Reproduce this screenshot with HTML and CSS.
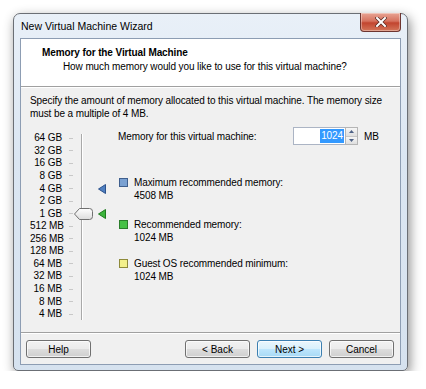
FILE: index.html
```html
<!DOCTYPE html>
<html lang="en">
<head>
  <meta charset="UTF-8" />
  <title>New Virtual Machine Wizard</title>
  <link rel="stylesheet" href="styles.css">
</head>
<body>

  <div class="window">
    <div class="titlebar">
      <span class="caption">New Virtual Machine Wizard</span>
      <button class="close" title="Close">
        <svg width="12" height="10" viewBox="0 0 12 10">
          <path d="M2 1 L10 9 M10 1 L2 9" stroke="#5a2a22" stroke-width="3.4" stroke-linecap="square"/>
          <path d="M2 1 L10 9 M10 1 L2 9" stroke="#fff" stroke-width="2" stroke-linecap="square"/>
        </svg>
      </button>
    </div>

    <div class="client">
      <div class="header">
        <h1>Memory for the Virtual Machine</h1>
        <p>How much memory would you like to use for this virtual machine?</p>
      </div>

      <div class="content">
        <p class="intro">Specify the amount of memory allocated to this virtual machine. The memory size<br>must be a multiple of 4 MB.</p>

        <div class="memory">
          <ul class="scale">
            <li><span class="lbl">64 GB</span><span class="tick"></span><span class="track"></span><span class="mark"></span></li>
            <li><span class="lbl">32 GB</span><span class="tick"></span><span class="track"></span><span class="mark"></span></li>
            <li><span class="lbl">16 GB</span><span class="tick"></span><span class="track"></span><span class="mark"></span></li>
            <li><span class="lbl">8 GB</span><span class="tick"></span><span class="track"></span><span class="mark"></span></li>
            <li><span class="lbl">4 GB</span><span class="tick"></span><span class="track"></span>
              <span class="mark"><svg width="8" height="10" viewBox="0 0 8 10"><path d="M0.5 5 L7.5 0.5 L7.5 9.5 Z" fill="#4f7fc0" stroke="#2c528c" stroke-width="1"/></svg></span></li>
            <li><span class="lbl">2 GB</span><span class="tick"></span><span class="track"></span><span class="mark"></span></li>
            <li><span class="lbl">1 GB</span><span class="tick"></span>
              <span class="track">
                <svg class="thumb" width="19" height="12" viewBox="0 0 19 12">
                  <defs>
                    <linearGradient id="thumbFill" x1="0" y1="0" x2="0" y2="1">
                      <stop offset="0" stop-color="#ffffff"/>
                      <stop offset="1" stop-color="#dcdcdc"/>
                    </linearGradient>
                  </defs>
                  <path d="M0.5 6 L5.5 0.5 L15.5 0.5 Q18.5 0.5 18.5 3.5 L18.5 8.5 Q18.5 11.5 15.5 11.5 L5.5 11.5 Z" fill="url(#thumbFill)" stroke="#707070" stroke-width="1"/>
                </svg>
              </span>
              <span class="mark"><svg width="8" height="10" viewBox="0 0 8 10"><path d="M0.5 5 L7.5 0.5 L7.5 9.5 Z" fill="#3cb43c" stroke="#1f7a1f" stroke-width="1"/></svg></span></li>
            <li><span class="lbl">512 MB</span><span class="tick"></span><span class="track"></span><span class="mark"></span></li>
            <li><span class="lbl">256 MB</span><span class="tick"></span><span class="track"></span><span class="mark"></span></li>
            <li><span class="lbl">128 MB</span><span class="tick"></span><span class="track"></span><span class="mark"></span></li>
            <li><span class="lbl">64 MB</span><span class="tick"></span><span class="track"></span><span class="mark"></span></li>
            <li><span class="lbl">32 MB</span><span class="tick"></span><span class="track"></span><span class="mark"></span></li>
            <li><span class="lbl">16 MB</span><span class="tick"></span><span class="track"></span><span class="mark"></span></li>
            <li><span class="lbl">8 MB</span><span class="tick"></span><span class="track"></span><span class="mark"></span></li>
            <li><span class="lbl">4 MB</span><span class="tick"></span><span class="track"></span><span class="mark"></span></li>
          </ul>

          <div class="settings">
            <div class="amount">
              <span class="amount-label">Memory for this virtual machine:</span>
              <div class="spinner">
                <div class="spin-input"><span class="selected">1024</span></div>
                <div class="spin-buttons">
                  <span class="spin up"><svg width="5" height="3" viewBox="0 0 5 3"><path d="M0 3 L2.5 0 L5 3 Z" fill="#4d6185"/></svg></span>
                  <span class="spin down"><svg width="5" height="3" viewBox="0 0 5 3"><path d="M0 0 L2.5 3 L5 0 Z" fill="#4d6185"/></svg></span>
                </div>
              </div>
              <span class="unit">MB</span>
            </div>

            <div class="legend legend-max">
              <span class="swatch blue"></span>
              <div>Maximum recommended memory:<br>4508 MB</div>
            </div>
            <div class="legend legend-rec">
              <span class="swatch green"></span>
              <div>Recommended memory:<br>1024 MB</div>
            </div>
            <div class="legend legend-min">
              <span class="swatch yellow"></span>
              <div>Guest OS recommended minimum:<br>1024 MB</div>
            </div>
          </div>
        </div>
      </div>

      <div class="buttons">
        <button class="btn">Help</button>
        <span class="spacer"></span>
        <button class="btn">&lt; Back</button>
        <button class="btn default">Next &gt;</button>
        <button class="btn">Cancel</button>
      </div>
    </div>
  </div>

</body>
</html>
```

FILE: styles.css
```css
body {
  margin: 0;
  padding: 13px 0 0 13px;
  background: #ffffff;
  font-family: "Liberation Sans", Arial, sans-serif;
  font-size: 10px;
  letter-spacing: -0.1px;
  color: #000;
}
.window {
  width: 395px;
  height: 358px;
  border: 1px solid #6b6f75;
  border-radius: 7px 7px 5px 5px;
  background: linear-gradient(to bottom, #e9f0f8 0%, #dbe6f2 40%, #d6e2ef 100%);
  box-shadow: 2px 4px 12px rgba(0, 0, 0, 0.45);
  display: flex;
  flex-direction: column;
  padding: 0 6px 5px 6px;
  box-sizing: border-box;
}
.titlebar {
  display: flex;
  align-items: flex-start;
  height: 24px;
}
.caption {
  font-size: 10.5px;
  letter-spacing: 0;
  padding: 6px 0 0 1px;
  color: #000;
}
.close {
  margin-left: auto;
  width: 41px;
  height: 19px;
  margin-top: -1px;
  border: 1px solid #6d3530;
  border-top: none;
  border-radius: 0 0 4px 4px;
  background: linear-gradient(to bottom, #e8a493 0%, #d6725e 45%, #c2452f 55%, #d4765a 100%);
  box-shadow: inset 0 0 0 1px rgba(255, 255, 255, 0.35);
  display: flex;
  align-items: center;
  justify-content: center;
  padding: 0;
}
.client {
  flex: 1;
  border: 1px solid #8d9db3;
  background: #f0f0f0;
  display: flex;
  flex-direction: column;
}
.header {
  background: #ffffff;
  height: 48px;
  border-bottom: 1px solid #a0a0a0;
  box-shadow: 0 1px 0 #ffffff;
  padding: 7px 0 0 21px;
  box-sizing: border-box;
}
.header h1 {
  margin: 0;
  font-size: 10px;
  font-weight: bold;
  line-height: 13px;
}
.header p {
  margin: 1px 0 0 21px;
  line-height: 13px;
}
.content {
  flex: 1;
  padding: 7px 0 0 9px;
}
.intro {
  margin: 0;
  line-height: 13px;
}
.memory {
  display: flex;
  margin-top: 7px;
}
.scale {
  list-style: none;
  margin: 0;
  padding: 5px 0 0 0;
}
.scale li {
  display: grid;
  grid-template-columns: 32px 12px 20px 18px;
  height: 12.57px;
  align-items: center;
}
.lbl {
  text-align: right;
  color: #000;
  white-space: nowrap;
  line-height: 12px;
}
.tick {
  width: 4px;
  height: 1px;
  margin-left: 7px;
  background: #c8c8c8;
}
.track {
  height: 100%;
  display: flex;
  align-items: center;
  background: linear-gradient(to right, transparent 7px, #a9a9a9 7px, #a9a9a9 8px, #ffffff 8px, #ffffff 9px, transparent 9px);
}
.scale li:first-child .track {
  background: linear-gradient(to right, transparent 7px, #a9a9a9 7px, #a9a9a9 8px, #ffffff 8px, #ffffff 9px, transparent 9px) 0 2px / 100% 100% no-repeat;
}
.thumb {
  display: block;
}
.mark {
  display: flex;
  align-items: center;
  padding-left: 4px;
}
.mark svg {
  display: block;
}
.settings {
  margin-left: 6px;
  flex: 1;
}
.amount {
  display: flex;
  align-items: center;
  height: 18px;
}
.amount-label {
  width: 175px;
}
.spinner {
  display: flex;
  height: 18px;
}
.spin-input {
  width: 50px;
  border: 1px solid #abb4c4;
  border-right: none;
  background: #fff;
  display: flex;
  align-items: center;
  justify-content: flex-end;
  padding-right: 1px;
}
.selected {
  background: #3399ff;
  color: #fff;
  line-height: 14px;
  padding: 0 1px;
}
.spin-buttons {
  width: 13px;
  display: flex;
  flex-direction: column;
  border: 1px solid #b5b5b5;
  box-sizing: border-box;
}
.spin {
  flex: 1;
  display: flex;
  align-items: center;
  justify-content: center;
  background: linear-gradient(to bottom, #f6f6f6, #dedede);
}
.spin.up {
  border-bottom: 1px solid #c6c6c6;
}
.spin svg {
  display: block;
}
.unit {
  margin-left: 6px;
}
.legend {
  display: flex;
  align-items: flex-start;
  line-height: 13px;
}
.legend-max {
  margin-top: 31px;
}
.legend-rec {
  margin-top: 16px;
}
.legend-min {
  margin-top: 13px;
}
.swatch {
  width: 7px;
  height: 7px;
  margin: 2px 6px 0 1px;
  flex: none;
}
.swatch.blue {
  background: #7aa1d2;
  border: 1px solid #3f5f8e;
}
.swatch.green {
  background: #46c146;
  border: 1px solid #2b7d2b;
}
.swatch.yellow {
  background: #f3f08c;
  border: 1px solid #8e8a3a;
}
.buttons {
  display: flex;
  align-items: flex-start;
  gap: 7px;
  height: 32px;
  box-sizing: border-box;
  padding: 7px 6px 0 5px;
  border-top: 1px solid #a0a0a0;
  box-shadow: inset 0 1px 0 #ffffff;
}
.spacer {
  flex: 1;
}
.btn {
  width: 65px;
  height: 18px;
  padding: 0;
  font-family: inherit;
  font-size: 10px;
  color: #000;
  border: 1px solid #707070;
  border-radius: 3px;
  background: linear-gradient(to bottom, #f2f2f2 0%, #ebebeb 49%, #dddddd 51%, #cfcfcf 100%);
  box-shadow: inset 0 0 0 1px rgba(255, 255, 255, 0.7);
}
.btn.default {
  border-color: #3c7fb1;
  background: linear-gradient(to bottom, #eaf6fd 0%, #d9f0fc 49%, #bee6fd 51%, #a7d9f5 100%);
}
```
